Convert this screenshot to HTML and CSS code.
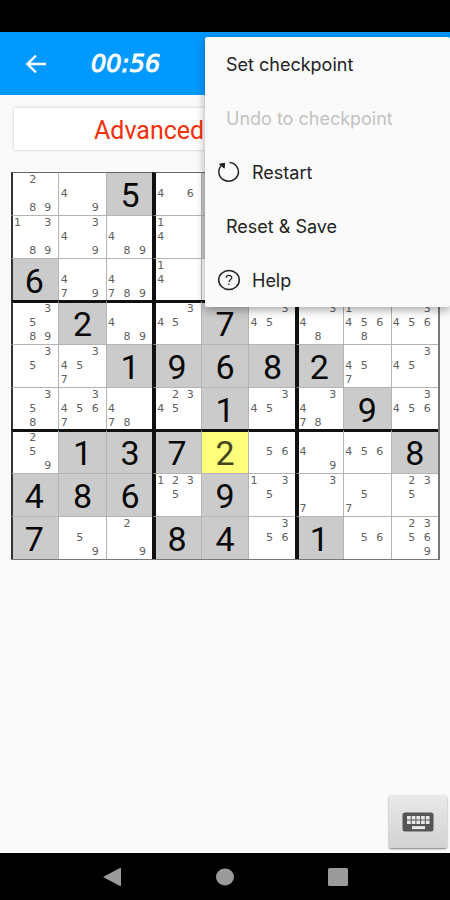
FILE: index.html
```html
<!DOCTYPE html>
<html lang="en">
<head>
<meta charset="utf-8">
<meta name="viewport" content="width=device-width, initial-scale=1">
<title>Sudoku</title>
<link rel="stylesheet" href="styles.css">
</head>
<body>
<div class="status"></div>
<header class="header">
  <button class="icon-button" aria-label="Back">
    <svg width="22" height="20" viewBox="0 0 22 20" fill="none" stroke="currentColor" stroke-width="2.4"><path d="M21 10H3M11 1.5L2.5 10L11 18.5"/></svg>
  </button>
  <time class="timer">00:56</time>
  <div class="menu" role="menu">
    <button class="item" role="menuitem">Set checkpoint</button>
    <button class="item" role="menuitem" disabled>Undo to checkpoint</button>
    <button class="item with-icon" role="menuitem">
      <svg width="24" height="24" viewBox="0 0 24 24" fill="none" stroke="currentColor" stroke-width="1.5"><path d="M12.5 2.6A9.8 9.3 0 1 1 4.2 5.8"/><path d="M2.5 4.2L7.6 3.2L7.2 8.2Z" fill="currentColor" stroke-width="1"/></svg>
      Restart
    </button>
    <button class="item" role="menuitem">Reset &amp; Save</button>
    <button class="item with-icon" role="menuitem">
      <svg width="24" height="24" viewBox="0 0 24 24" fill="none" stroke="currentColor" stroke-width="1.5"><ellipse cx="12" cy="12" rx="10.3" ry="9.6"/><path stroke-width="1.2" d="M9.2 9.8C9.3 6.6 14.8 6.6 14.8 9.7C14.8 11.7 12 11.6 12 14M12 15.4V17"/></svg>
      Help
    </button>
  </div>
</header>
<main class="main">
  <div class="level">Advanced</div>
  <div class="board" id="board"></div>
  <button class="keyboard" aria-label="Keyboard">
    <svg width="32" height="20" viewBox="0 0 32 20"><rect x="0.5" y="0.5" width="31" height="19" rx="2.5" fill="#555"/><g fill="none" stroke="#e8e8e8" stroke-width="3.4"><path d="M5 5.7H28M5 10.3H28" stroke-dasharray="3.7 1"/><path d="M10 15.6H23" stroke-width="3"/></g></svg>
  </button>
</main>
<nav class="nav">
  <button aria-label="Back"><svg width="20" height="20" viewBox="0 0 20 20"><path d="M1 10L18 1Q19 .5 19 2V18Q19 19.5 18 19Z"/></svg></button>
  <button aria-label="Home"><svg width="20" height="20" viewBox="0 0 20 20"><ellipse cx="10" cy="10" rx="9" ry="8.5"/></svg></button>
  <button aria-label="Recent apps"><svg width="20" height="20" viewBox="0 0 20 20"><rect y="1" width="20" height="18" rx="1.5"/></svg></button>
</nav>
<script src="board.js"></script>
</body>
</html>
```
FILE: styles.css
```css
* { box-sizing: border-box; }
body {
  margin: 0;
  min-height: 100vh;
  display: flex;
  flex-direction: column;
  background: #fafafa;
  color: #1c1c1c;
  font-family: Inter, Roboto, sans-serif;
}
button {
  border: 0;
  padding: 0;
  background: none;
  color: inherit;
  font: inherit;
}
svg { display: block; flex: none; }
.status { height: 32px; background: #000; }
.header {
  position: relative;
  display: flex;
  align-items: center;
  gap: 44px;
  height: 63px;
  padding-left: 25px;
  background: #0099ff;
  color: #fff;
}
.timer {
  font: italic 24px "DejaVu Sans", sans-serif;
  -webkit-text-stroke: 1px #fff;
}
.menu {
  position: absolute;
  z-index: 5;
  top: 5px;
  right: 0;
  width: 245px;
  border-radius: 2px;
  background: #fafafa;
  color: #222;
  box-shadow: 0 3px 10px rgba(0, 0, 0, .35);
}
.item {
  display: flex;
  align-items: center;
  width: 100%;
  height: 54px;
  padding-left: 21px;
  font-size: 18px;
}
.item:disabled { color: #c2c2c2; }
.with-icon { gap: 11px; padding-left: 12px; }
.main {
  flex: 1;
  display: flex;
  flex-direction: column;
  padding: 13px 10px 5px 11px;
}
.level {
  height: 42px;
  margin: 0 3px 22px;
  padding-left: 80px;
  background: #fff;
  box-shadow: 0 0 3px rgba(0, 0, 0, .22);
  color: #f4310b;
  font: 25px/45px Roboto, sans-serif;
}
.board {
  display: grid;
  grid-template-columns: repeat(9, 1fr);
  grid-auto-rows: 43px;
  border-right: 2px solid #777;
  background: #fff;
  box-shadow: 0 1px #777;
}
.cell {
  min-width: 0;
  border-top: 1px solid #b4b4b4;
  border-left: 1px solid #b4b4b4;
}
.given, .selected {
  background: #cbcbcb;
  color: #080808;
  font: 34px/44px Roboto, sans-serif;
  text-align: center;
}
.selected { background: #ffff7b; color: #45451c; }
.first-row { border-top-color: #666; }
.first-col { border-left: 2px solid #333; }
.first-col.given { padding-right: 3px; }
.box-row { position: relative; border-top: 3px solid #111; margin-top: -1px; line-height: 42px; }
.box-col { position: relative; border-left: 4px solid #111; margin-left: -1px; }
.box-col.given { padding-right: 3px; }
.notes {
  display: grid;
  grid-template-columns: repeat(3, 1fr);
  grid-template-rows: repeat(3, 14px);
  margin: 0 3px -1px -3px;
  color: #606060;
  font: 11px/14px "DejaVu Sans", sans-serif;
  text-align: center;
}
.box-row .notes { margin-top: -1px; }
.keyboard {
  display: grid;
  place-items: center;
  align-self: flex-end;
  width: 58px;
  height: 53px;
  margin: auto -7px 0 0;
  border-radius: 2px;
  background: linear-gradient(#e9e9e9, #d2d2d2);
  box-shadow: 0 1px 2px rgba(0, 0, 0, .5);
}
.nav {
  display: grid;
  grid-template-columns: repeat(3, 1fr);
  height: 47px;
  padding: 0 56px;
  background: #000;
}
.nav button { display: grid; place-items: center; }
.nav svg { fill: #9b9b9b; }
```
FILE: board.js
```javascript
// "=n" is a given digit, "*n" the selected cell; plain digits are pencil notes.
const rows = [
  "289 49 =5 46 = . . . .",
  "1389 349 489 14 = . . . .",
  "=6 479 4789 14 . . . . .",
  "3589 =2 489 345 =7 345 348 14568 3456",
  "35 3457 =1 =9 =6 =8 =2 457 345",
  "358 34567 478 2345 =1 345 3478 =9 3456",
  "259 =1 =3 =7 *2 56 49 456 =8",
  "=4 =8 =6 1235 =9 135 37 57 235",
  "=7 59 29 =8 =4 356 =1 56 23569"
];
const board = document.getElementById("board");
rows.forEach((line, r) => line.split(" ").forEach((value, c) => {
  const cell = document.createElement("div");
  cell.className = "cell";
  if (r === 0) cell.classList.add("first-row");
  if (c === 0) cell.classList.add("first-col");
  if (r === 3 || r === 6) cell.classList.add("box-row");
  if (c === 3 || c === 6) cell.classList.add("box-col");
  if (value[0] === "=" || value[0] === "*") {
    cell.classList.add(value[0] === "=" ? "given" : "selected");
    cell.textContent = value.slice(1);
  } else {
    const notes = document.createElement("div");
    notes.className = "notes";
    for (let n = 1; n <= 9; n++) {
      const note = document.createElement("span");
      note.textContent = value.includes(n) ? n : "";
      notes.append(note);
    }
    cell.append(notes);
  }
  board.append(cell);
}));
```
